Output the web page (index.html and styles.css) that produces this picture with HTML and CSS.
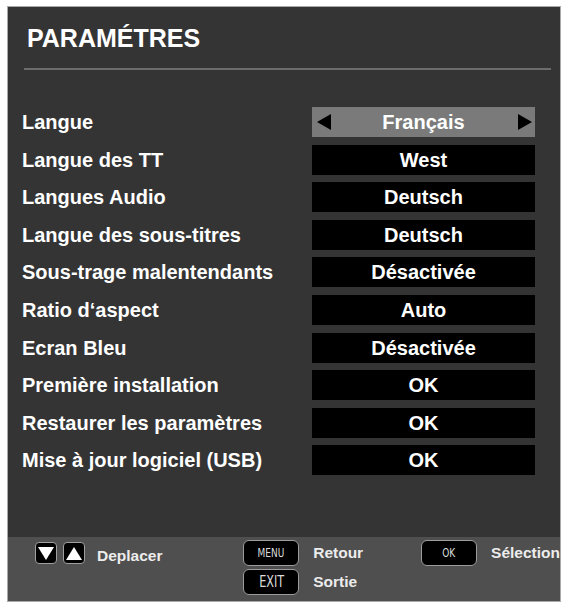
FILE: index.html
```html
<!DOCTYPE html>
<html lang="fr">

<head>
    <meta charset="UTF-8">
    <meta name="viewport" content="width=device-width, initial-scale=1.0">
    <title>Paramètres</title>
    <link rel="stylesheet" href="styles.css">
</head>

<body>

    <div class="panel">
        <h1 class="title">PARAMÉTRES</h1>
        <div class="rule"></div>

        <div class="settings">
            <div class="row">
                <span class="label">Langue</span>
                <span class="value selected">
                    <span class="tri left"></span>
                    Français
                    <span class="tri right"></span>
                </span>
            </div>
            <div class="row">
                <span class="label">Langue des TT</span>
                <span class="value">West</span>
            </div>
            <div class="row">
                <span class="label">Langues Audio</span>
                <span class="value">Deutsch</span>
            </div>
            <div class="row">
                <span class="label">Langue des sous-titres</span>
                <span class="value">Deutsch</span>
            </div>
            <div class="row">
                <span class="label">Sous-trage malentendants</span>
                <span class="value">Désactivée</span>
            </div>
            <div class="row">
                <span class="label">Ratio d‘aspect</span>
                <span class="value">Auto</span>
            </div>
            <div class="row">
                <span class="label">Ecran Bleu</span>
                <span class="value">Désactivée</span>
            </div>
            <div class="row">
                <span class="label">Première installation</span>
                <span class="value">OK</span>
            </div>
            <div class="row">
                <span class="label">Restaurer les paramètres</span>
                <span class="value">OK</span>
            </div>
            <div class="row">
                <span class="label">Mise à jour logiciel (USB)</span>
                <span class="value">OK</span>
            </div>
        </div>

        <div class="footer">
            <div class="hint move">
                <span class="arrow-key"><span class="tri down"></span></span>
                <span class="arrow-key"><span class="tri up"></span></span>
                <span class="hint-text">Deplacer</span>
            </div>
            <div class="hint-col">
                <div class="hint">
                    <span class="key"><span class="key-text">MENU</span></span>
                    <span class="hint-text">Retour</span>
                </div>
                <div class="hint">
                    <span class="key"><span class="key-text big">EXIT</span></span>
                    <span class="hint-text">Sortie</span>
                </div>
            </div>
            <div class="hint">
                <span class="key"><span class="key-text">OK</span></span>
                <span class="hint-text">Sélection</span>
            </div>
        </div>
    </div>

</body>

</html>
```

FILE: styles.css
```css
body {
    margin: 0;
    padding: 6px 0 0 7px;
    background-color: #ffffff;
    font-family: "Liberation Sans", Arial, sans-serif;
}

.panel {
    width: 554px;
    height: 596px;
    box-sizing: border-box;
    border: 1px solid #a8a8a8;
    background-color: #343434;
    display: flex;
    flex-direction: column;
    color: #ffffff;
}

.title {
    margin: 0;
    padding: 17px 0 0 19px;
    font-size: 25px;
    line-height: 28px;
    font-weight: bold;
}

.rule {
    height: 2px;
    margin: 16px 9px 0 16px;
    background-color: #6c6c6c;
}

.settings {
    display: flex;
    flex-direction: column;
    gap: 7.6px;
    padding: 37px 25px 0 14px;
}

.row {
    display: flex;
    justify-content: space-between;
    align-items: center;
    height: 30px;
}

.label {
    font-size: 20px;
    font-weight: bold;
    line-height: 30px;
    white-space: nowrap;
}

.value {
    position: relative;
    width: 223px;
    height: 30px;
    line-height: 30px;
    background-color: #000000;
    text-align: center;
    font-size: 20px;
    font-weight: bold;
}

.value.selected {
    background-color: #7a7a7a;
}

.tri {
    width: 0;
    height: 0;
    border-style: solid;
    display: block;
}

.value .tri {
    position: absolute;
    top: 7px;
}

.tri.left {
    left: 5px;
    border-width: 8px 14px 8px 0;
    border-color: transparent #000000 transparent transparent;
}

.tri.right {
    right: 3px;
    border-width: 8px 0 8px 14px;
    border-color: transparent transparent transparent #000000;
}

.footer {
    margin-top: auto;
    height: 64px;
    background-color: #4f4f4f;
    display: flex;
    align-items: flex-start;
    padding: 3px 0 0 27px;
    box-sizing: border-box;
}

.hint {
    display: flex;
    align-items: center;
}

.move {
    width: 213px;
    padding-top: 1px;
}

.hint-col {
    width: 182px;
    display: flex;
    flex-direction: column;
    gap: 3px;
}

.hint-text {
    font-size: 15.5px;
    font-weight: bold;
    color: #ececec;
    margin-left: 14px;
}

.move .hint-text {
    margin-left: 12px;
    padding-top: 6px;
}

.arrow-key {
    width: 22px;
    height: 22px;
    margin-right: 6px;
    box-sizing: border-box;
    border: 1.5px solid #a0a0a0;
    border-radius: 4px;
    background-color: #000000;
    display: flex;
    justify-content: center;
    align-items: center;
}

.arrow-key + .arrow-key {
    margin-right: 0;
}

.tri.down {
    border-width: 13px 8px 0 8px;
    border-color: #ffffff transparent transparent transparent;
}

.tri.up {
    border-width: 0 8px 13px 8px;
    border-color: transparent transparent #ffffff transparent;
}

.key {
    width: 56px;
    height: 26px;
    box-sizing: border-box;
    border: 1.5px solid #9c9c9c;
    border-radius: 6px;
    background-color: #000000;
    display: flex;
    justify-content: center;
    align-items: center;
}

.key-text {
    display: inline-block;
    font-family: "DejaVu Sans", sans-serif;
    font-size: 12px;
    color: #dcdcdc;
    transform: scaleX(0.75);
}

.key-text.big {
    font-size: 15px;
}
```
